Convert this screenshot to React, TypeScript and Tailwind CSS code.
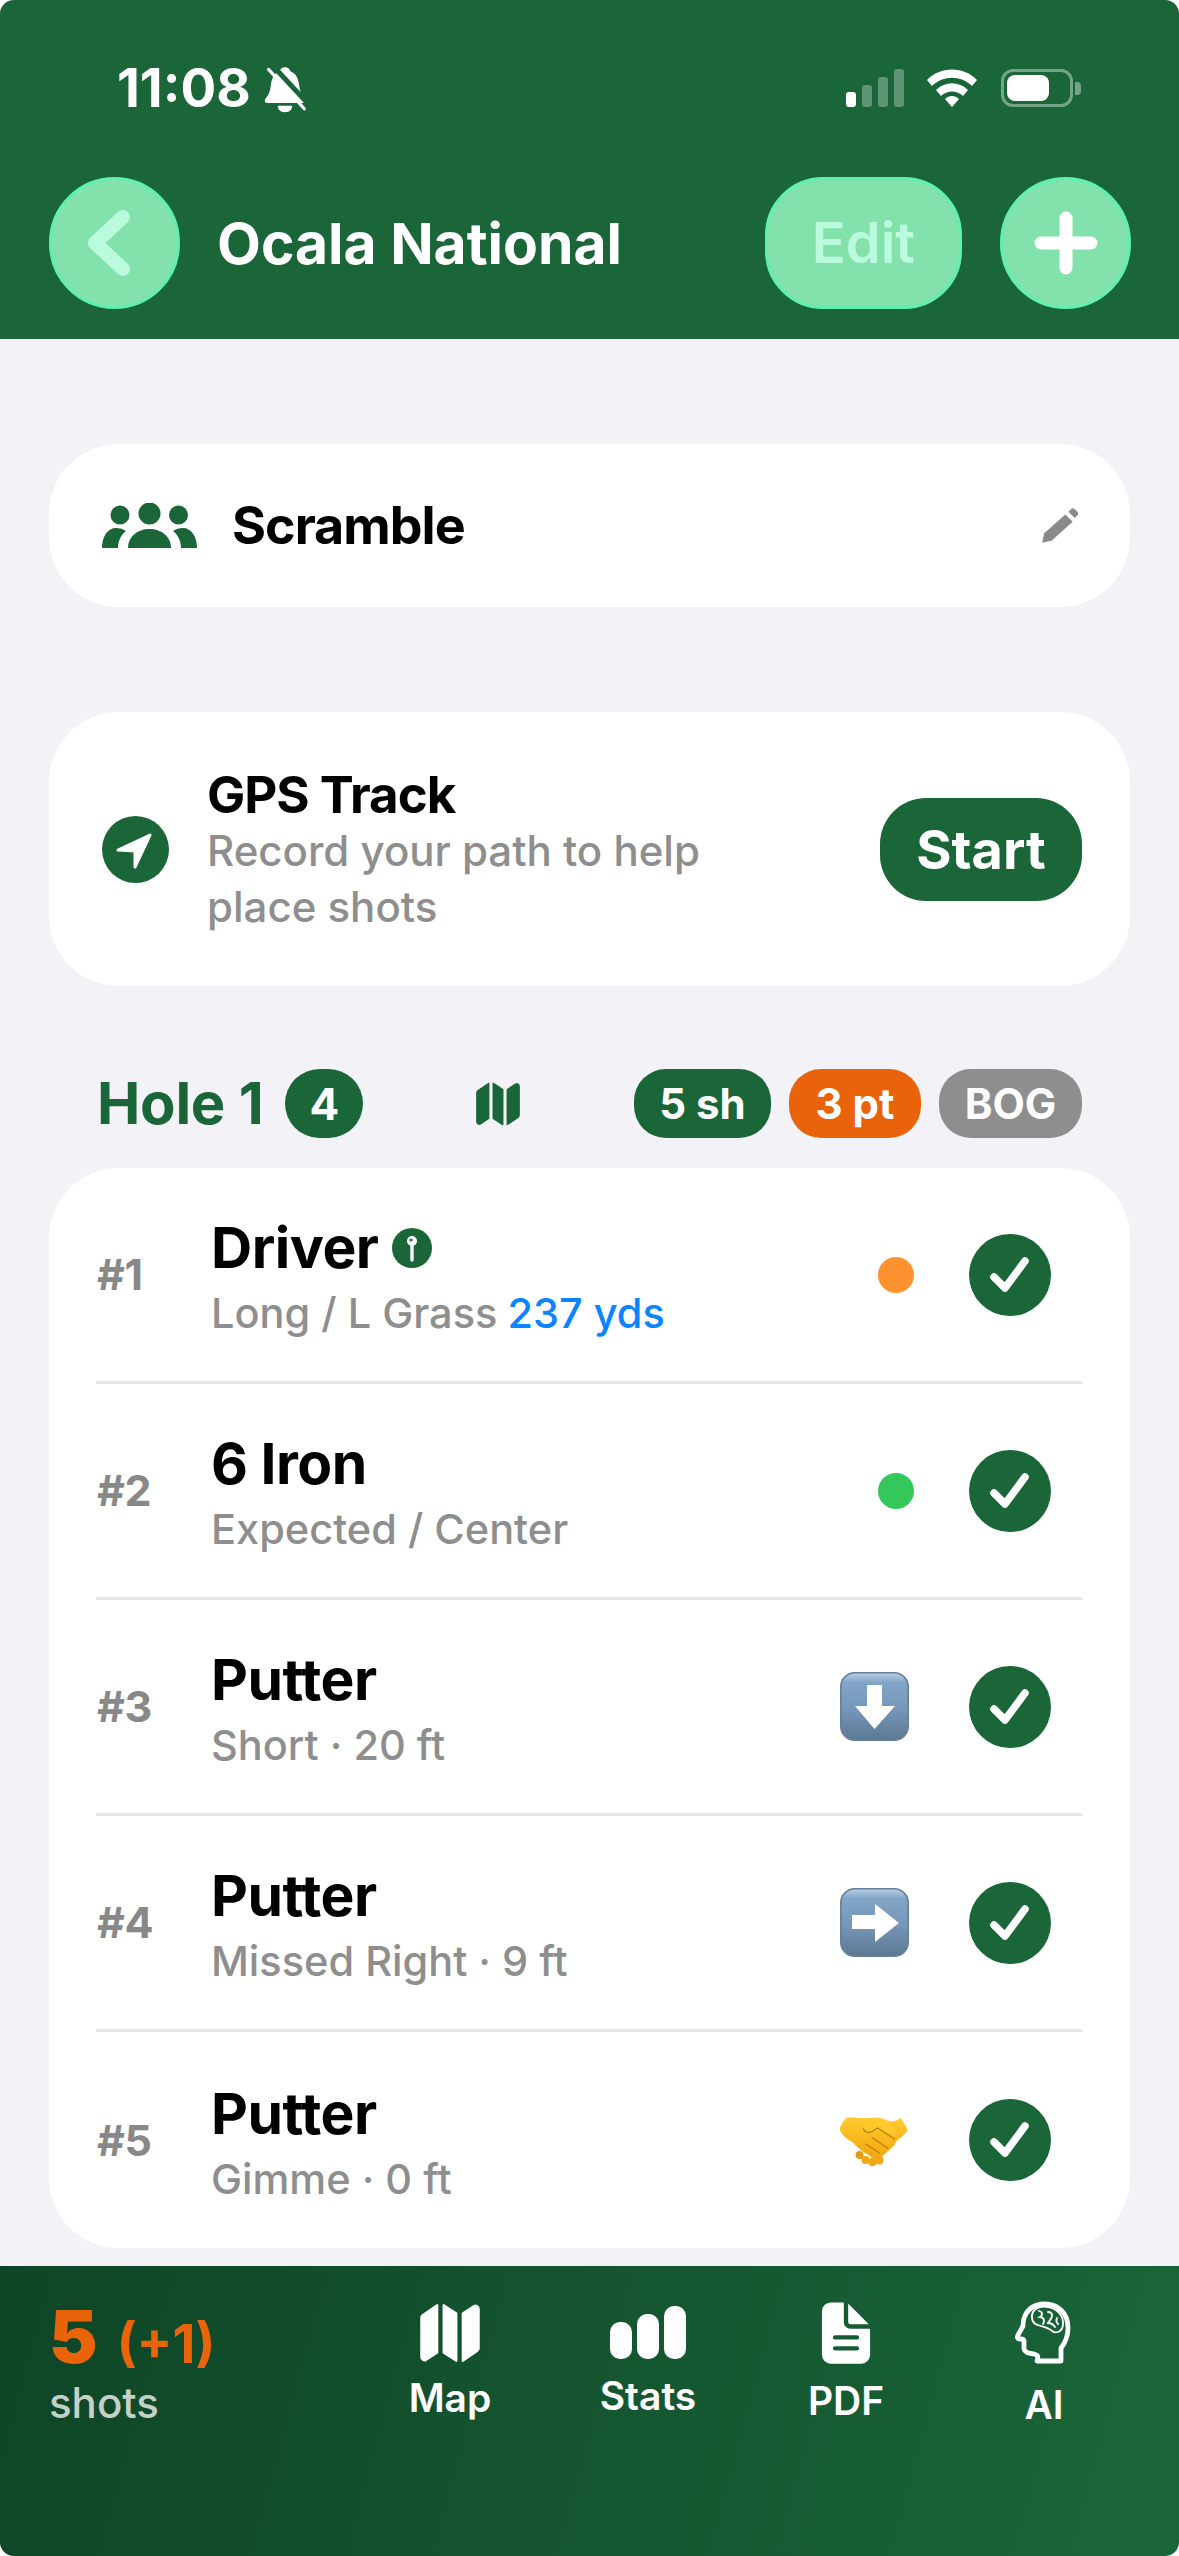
import React from "react";
import { IoMap, IoDocumentText } from "react-icons/io5";

function BellOff() {
  return (
    <svg width="50" height="50" viewBox="0 0 70 70" className="ml-[9px] shrink-0">
      <path d="M35 6c4 0 7 3 8 6 8 3 11 11 12 20 1 9 3 13 8 19 1 3-1 5-3 5H10c-3 0-4-3-3-5 5-6 7-10 8-19 1-9 4-17 12-20 1-3 4-6 8-6z" fill="#fff" />
      <path d="M25 60h20c0 6-4 9-10 9s-10-3-10-9z" fill="#fff" />
      <path d="M16 7l50 54" stroke="#1a6639" strokeWidth="7" transform="translate(3 -2)" />
      <path d="M12 9l50 55" stroke="#fff" strokeWidth="4.5" strokeLinecap="round" />
    </svg>
  );
}

function StatusIcons() {
  return (
    <div className="flex items-center">
      <svg width="60" height="38" viewBox="0 0 60 38">
        <rect x="0" y="23" width="10" height="15" rx="3" fill="#fff" />
        <rect x="16" y="16" width="10" height="22" rx="3" fill="#fff" fillOpacity=".3" />
        <rect x="32" y="8" width="10" height="30" rx="3" fill="#fff" fillOpacity=".3" />
        <rect x="48" y="0" width="10" height="38" rx="3" fill="#fff" fillOpacity=".3" />
      </svg>
      <svg width="52" height="38" viewBox="0 0 52 38" className="ml-[20px]">
        <path d="M1 11C14-3 38-3 51 11l-5 6C35 6 17 6 6 17z" fill="#fff" />
        <path d="M10 21c9-9 23-9 32 0l-5 6c-6-6-16-6-22 0z" fill="#fff" />
        <path d="M19 30c4-4 10-4 14 0l-7 8z" fill="#fff" />
      </svg>
      <div className="ml-[23px] w-[72px] h-[38px] rounded-[12px] border-[3px] border-white/40 p-[3px]">
        <div className="w-[42px] h-full rounded-[8px] bg-white" />
      </div>
      <div className="ml-[2px] w-[6px] h-[13px] rounded-r-[4px] bg-white/40" />
    </div>
  );
}

function Team() {
  return (
    <svg width="95" height="46" viewBox="0 0 95 46" className="shrink-0 text-[#1a6639]" fill="currentColor">
      <circle cx="18" cy="12" r="9.500" />
      <circle cx="47.500" cy="10.500" r="11" />
      <circle cx="76.500" cy="12" r="9.500" />
      <path d="M0 45c0-12 6-20 14-20 4 0 7 1 10 3-5 4-8 10-8 17z" />
      <path d="M26 45c0-11 9-19 21.500-19S69 34 69 45z" />
      <path d="M95 45c0-12-6-20-14-20-4 0-7 1-10 3 5 4 8 10 8 17z" />
    </svg>
  );
}

function Pencil() {
  return (
    <svg width="40" height="38" viewBox="0 0 38 36" fill="none" className="shrink-0">
      <path d="M2 34l2-9L24 7l7 7-20 18z" fill="#8a8a8a" />
      <path d="M27 4.500l2.500-2.500c1-1 2.500-1 3.500 0l2.500 2.500c1 1 1 2.500 0 3.500L33 10.500z" fill="#8a8a8a" />
    </svg>
  );
}

function Tee() {
  return (
    <svg width="40" height="40" viewBox="0 0 40 40" className="shrink-0">
      <circle cx="20" cy="20" r="20" fill="#1a6639" />
      <path d="M20 12v20" stroke="#fff" strokeWidth="3.4" strokeLinecap="round" />
      <circle cx="20" cy="13" r="5" fill="#fff" />
      <circle cx="19" cy="12" r="1.6" fill="#1a6639" />
    </svg>
  );
}

function Check() {
  return (
    <div className="w-[82px] h-[82px] rounded-full bg-[#1a6639] flex items-center justify-center shrink-0">
      <svg width="42" height="38" viewBox="0 0 42 38" fill="none">
        <path d="M5 21l11 11L36 5" stroke="#fff" strokeWidth="7.5" strokeLinecap="round" strokeLinejoin="round" />
      </svg>
    </div>
  );
}

function ArrowKey({ dir }: { dir: "down" | "right" }) {
  const id = `key-${dir}`;
  return (
    <svg width="69" height="69" viewBox="0 0 69 69" className="shrink-0">
      <defs>
        <linearGradient id={id} x1="0" y1="0" x2="0" y2="1">
          <stop offset="0" stopColor="#bcd0e2" />
          <stop offset=".14" stopColor="#82a6c8" />
          <stop offset=".55" stopColor="#7596b7" />
          <stop offset="1" stopColor="#5c7892" />
        </linearGradient>
      </defs>
      <rect x=".8" y=".8" width="67.4" height="67.4" rx="14" fill={`url(#${id})`} stroke="#66809c" strokeWidth="1.6" />
      {dir === "down" ? (
        <path d="M27 13h15v21h13L34.500 57 15 34h12z" fill="#fff" />
      ) : (
        <path d="M12 27h23V16l24 19-24 19V41H12z" fill="#fff" />
      )}
    </svg>
  );
}

function Handshake() {
  return (
    <svg width="69" height="69" viewBox="0 0 69 69" className="shrink-0">
      <defs>
        <linearGradient id="shake" x1="0" y1="0" x2="0" y2="1">
          <stop offset="0" stopColor="#ffcc2f" />
          <stop offset="1" stopColor="#f2a60f" />
        </linearGradient>
      </defs>
      <g transform="translate(-1.500 8)">
        <circle cx="21" cy="41" r="4" fill="#e39a14" />
        <circle cx="27" cy="46" r="4" fill="#f0a814" />
        <circle cx="34" cy="48" r="4.300" fill="#f0a814" />
        <circle cx="41" cy="46.500" r="4" fill="#f0a814" />
        <path d="M8 4c6-2 14 1 22 0 6-1 13-1 20 3 4 1 8 0 12-3 4 5 6 9 7 13-3 4-8 7-11 10l-2 4-13 12c-5 3-9 2-13-2-6-3-12-8-16-13C9 26 3 21 1 15 3 10 5 6 8 4z" fill="url(#shake)" />
        <path d="M25 14c3-6 8-9 14-8 7 0 13 5 19 11l-3 3c-6-2-12-6-20-4-3 3-7 3-10-2z" fill="#ffc92c" />
        <path d="M25 15c1 3 5 5 9 2l5-3M39 14l17 11M34 24l15 10M27 30l14 9" fill="none" stroke="#c27a08" strokeWidth="1.300" strokeLinecap="round" />
      </g>
    </svg>
  );
}

function StatsBars() {
  return (
    <svg width="76" height="53" viewBox="0 0 76 53" fill="#fff" className="shrink-0">
      <rect x="0" y="16" width="22" height="37" rx="10" />
      <rect x="27" y="8" width="22" height="45" rx="10" />
      <rect x="54" y="0" width="22" height="53" rx="10" />
    </svg>
  );
}

function HeadBrain() {
  return (
    <svg width="60" height="70" viewBox="14 16 60 70" fill="none" className="shrink-0">
      <path d="M37 76c2-6 0-6-3-7-5-1-9-1-10-5v-8c0-2-2-2-4-2-3 0-3-2-2-4l5-9c0-15 10-22 22-22s23 8 23 24c0 9-3 15-7 20v13z" stroke="#fff" strokeWidth="4.800" strokeLinejoin="round" transform="translate(0 3)" />
      <path d="M33 30c3-5 10-6 15-5 8 1 16 8 15 18-1 7-7 9-11 6-3-4-9-4-14-6-5-1-8-7-5-13z" stroke="#fff" strokeWidth="1.800" />
      <path d="M39 29c4 1 4 4 1 6 4 0 5 4 3 7M48 30c5 0 5 5 2 8l-2 3c3 0 5 1 7 4M57 36c-1 2-1 4 1 6" stroke="#fff" strokeWidth="1.800" strokeLinecap="round" />
    </svg>
  );
}

type Shot = {
  n: number;
  club: string;
  detail: string;
  yards?: string;
  tee?: boolean;
  mark: React.ReactNode;
};

const shots: Shot[] = [
  { n: 1, club: "Driver", detail: "Long / L Grass", yards: "237 yds", tee: true, mark: <div className="w-[36px] h-[36px] rounded-full bg-[#ff9230] mr-[55px]" /> },
  { n: 2, club: "6 Iron", detail: "Expected / Center", mark: <div className="w-[36px] h-[36px] rounded-full bg-[#34c759] mr-[55px]" /> },
  { n: 3, club: "Putter", detail: "Short · 20 ft", mark: <div className="mr-[60px]"><ArrowKey dir="down" /></div> },
  { n: 4, club: "Putter", detail: "Missed Right · 9 ft", mark: <div className="mr-[60px]"><ArrowKey dir="right" /></div> },
  { n: 5, club: "Putter", detail: "Gimme · 0 ft", mark: <div className="mr-[60px]"><Handshake /></div> },
];

function ShotRow({ shot }: { shot: Shot }) {
  return (
    <div className="h-[216px] flex items-center pl-[1px] pr-[31px]">
      <div className="w-[114px] text-[43px] leading-none font-bold text-[#888888] shrink-0 tracking-[-0.5px]">#{shot.n}</div>
      <div className="flex-1 min-w-0 pt-[4px]">
        <div className="flex items-center gap-[13px] text-[57px] leading-[66px] font-bold text-black tracking-[-0.5px]">
          {shot.club}
          {shot.tee && <Tee />}
        </div>
        <div className="mt-[7px] text-[41.5px] leading-[50px] font-medium text-[#8e8e8e] whitespace-nowrap">
          {shot.detail}
          {shot.yards && <span className="ml-[10px] text-[#0a84ff]">{shot.yards}</span>}
        </div>
      </div>
      {shot.mark}
      <Check />
    </div>
  );
}

function NavItem({ icon, label }: { icon: React.ReactNode; label: string }) {
  return (
    <div className="w-[198px] flex flex-col items-center gap-[17px]">
      {icon}
      <div className="text-[39px] leading-[40px] font-semibold text-white">{label}</div>
    </div>
  );
}

export default function App() {
  return (
    <div className="w-[1179px] h-[2556px] flex flex-col bg-[#f2f2f7] rounded-[14px] overflow-hidden [font-family:Inter,'Noto_Sans',sans-serif]">
      <header className="h-[339px] bg-[#1a6639] shrink-0 text-white">
        <div className="h-[177px] pt-[66px] pl-[117px] pr-[98px] flex items-start justify-between">
          <div className="flex items-center h-[44px]">
            <span className="text-[53px] leading-none font-bold">11:08</span>
            <BellOff />
          </div>
          <div className="pt-[3px]">
            <StatusIcons />
          </div>
        </div>
        <div className="pl-[49px] pr-[48px] flex items-center">
          <button className="w-[131px] h-[132px] rounded-full bg-[#83e2ac] border-[3px] border-[#5ff0b0] flex items-center justify-center">
            <svg width="56" height="72" viewBox="0 0 56 72" fill="none" className="mr-[16px]">
              <path d="M44 10L16 36l28 26" stroke="#b9fbdc" strokeWidth="14" strokeLinecap="round" strokeLinejoin="round" />
            </svg>
          </button>
          <h1 className="ml-[37px] text-[57px] leading-none font-bold">Ocala National</h1>
          <button className="ml-auto w-[197px] h-[132px] rounded-[58px] bg-[#83e2ac] border-[3px] border-[#5ff0b0] text-[#b9fbdc] text-[56px] font-semibold">
            Edit
          </button>
          <button className="ml-[38px] w-[131px] h-[132px] rounded-full bg-[#83e2ac] border-[3px] border-[#5ff0b0] flex items-center justify-center">
            <svg width="64" height="64" viewBox="0 0 64 64" fill="none">
              <path d="M32 7v50M7 32h50" stroke="#fff" strokeWidth="13" strokeLinecap="round" />
            </svg>
          </button>
        </div>
      </header>

      <main className="flex-1 px-[49px] pt-[105px]">
        <section className="h-[163px] rounded-[70px] bg-white flex items-center pl-[53px] pr-[50px]">
          <Team />
          <div className="ml-[35px] flex-1 text-[52px] leading-none font-bold text-black tracking-[-1px]">Scramble</div>
          <Pencil />
        </section>

        <section className="mt-[105px] h-[274px] rounded-[70px] bg-white flex items-center pl-[53px] pr-[48px]">
          <div className="w-[67px] h-[67px] rounded-full bg-[#1a6639] shrink-0">
            <svg width="67" height="67" viewBox="0 0 67 67">
              <path d="M16 34l32-15-15 32V35z" fill="#fff" stroke="#fff" strokeWidth="3" strokeLinejoin="round" />
            </svg>
          </div>
          <div className="ml-[38px] flex-1 pt-[3px]">
            <div className="text-[51px] leading-[56px] font-bold text-black tracking-[-1px]">GPS Track</div>
            <div className="text-[42px] leading-[56px] font-medium text-[#8e8e8e] w-[520px]">Record your path to help place shots</div>
          </div>
          <button className="w-[202px] h-[103px] rounded-[46px] bg-[#1a6639] text-white text-[54px] font-bold">Start</button>
        </section>

        <section className="mt-[83px] h-[69px] flex items-center pl-[48px] pr-[48px]">
          <h2 className="text-[58px] leading-none font-bold text-[#1a6639] tracking-[-0.25px] -translate-y-[1px]">Hole 1</h2>
          <div className="ml-[22px] w-[78px] h-[69px] rounded-full bg-[#1a6639] text-white text-[44px] font-bold flex items-center justify-center">4</div>
          <IoMap className="ml-[110px] text-[#1a6639] w-[50px] h-[50px]" />
          <div className="ml-auto flex items-center gap-[18px] text-white text-[42px] font-bold">
            <div className="w-[137px] h-[69px] rounded-[32px] bg-[#1a6639] flex items-center justify-center">5 sh</div>
            <div className="w-[132px] h-[69px] rounded-[32px] bg-[#e8630a] flex items-center justify-center">3 pt</div>
            <div className="w-[143px] h-[69px] rounded-[32px] bg-[#8e8e8e] flex items-center justify-center">BOG</div>
          </div>
        </section>

        <section className="mt-[30px] rounded-[70px] bg-white pl-[47px] pr-[48px] divide-y-[3px] divide-[#e5e5ea]">
          {shots.map((shot) => (
            <ShotRow key={shot.n} shot={shot} />
          ))}
        </section>
      </main>

      <footer className="h-[290px] shrink-0 pb-[100px] flex items-center bg-[linear-gradient(105deg,#0e4526,#1a6639)]">
        <div className="w-[351px] pl-[49px] pt-[4px] shrink-0">
          <div className="flex items-baseline text-[#e8630a] font-bold">
            <span className="text-[73px] leading-[72px] font-black">5</span>
            <span className="ml-[19px] text-[53px] leading-[72px]">(+1)</span>
          </div>
          <div className="text-[42px] leading-[46px] font-medium text-white/75">shots</div>
        </div>
        <NavItem icon={<IoMap className="text-white w-[68px] h-[68px] -my-[6px]" />} label="Map" />
        <NavItem icon={<StatsBars />} label="Stats" />
        <NavItem icon={<IoDocumentText className="text-white w-[70px] h-[70px] -my-[4px]" />} label="PDF" />
        <NavItem icon={<HeadBrain />} label="AI" />
      </footer>
    </div>
  );
}
